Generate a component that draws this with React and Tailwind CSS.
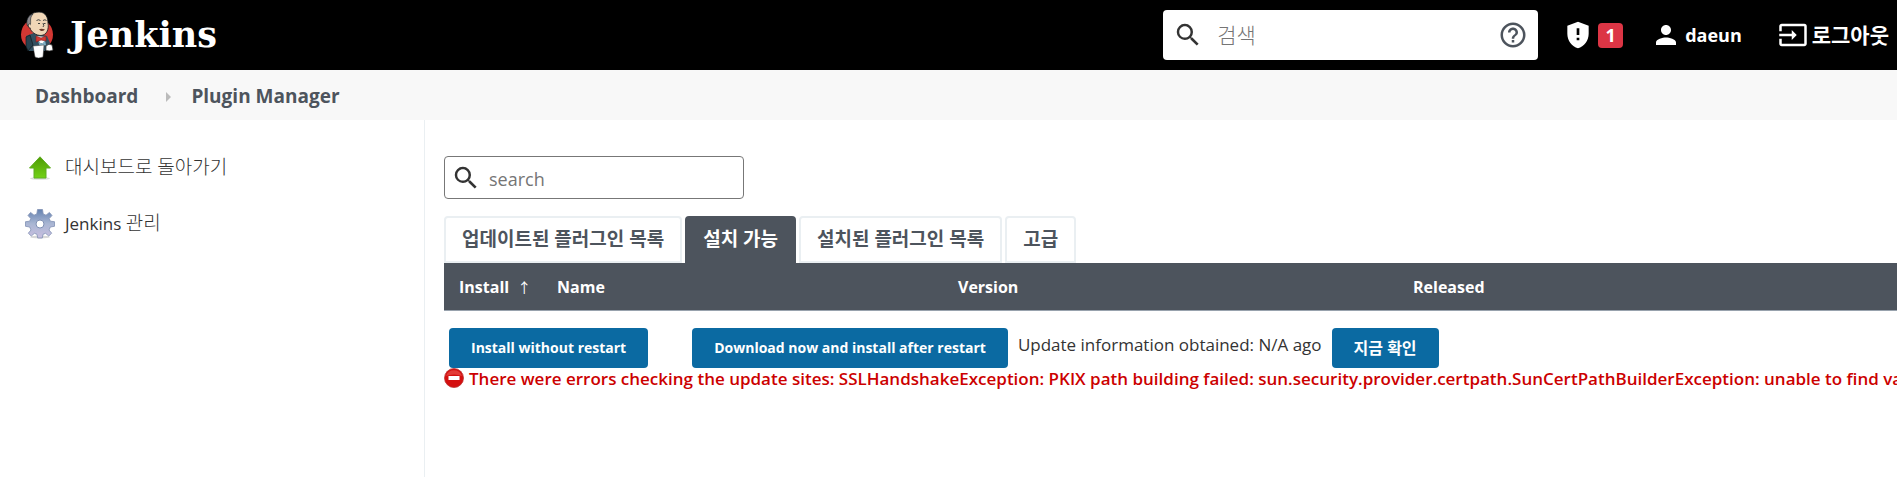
import { useState } from 'react';
import { MdSearch, MdHelpOutline, MdPerson, MdInput, MdGppMaybe } from 'react-icons/md';

const tabs = ['업데이트된 플러그인 목록', '설치 가능', '설치된 플러그인 목록', '고급'];

function JenkinsLogo() {
  return (
    <svg viewBox="0 0 34 48" className="h-12 w-[34px] shrink-0" aria-hidden="true">
      <circle cx="17" cy="23.500" r="16" fill="#d33833" />
      <path d="M6 25 L14 22 L27 25 L30 32 L25 40 L9 40 L6 35 Z" fill="#335061" />
      <path d="M6 26 L10 24 L13 34 L8 40 L6 35 Z" fill="#28424f" stroke="#131b20" strokeWidth=".7" />
      <path d="M16 25 L26 26 L24 33 L20 32 Z" fill="#fff" />
      <path d="M18 30 L22 33 L25 29 L26 34 L20 36 Z" fill="#81b0c4" />
      <path d="M8 11 C8 4 13 1 19 1 C26 1 28 7 28 12 C29 18 27 24 21 24.500 C16 24.500 11 21 10 17 Z" fill="#f0d6b7" stroke="#131b20" strokeWidth=".8" />
      <path d="M7.500 15 C5.500 10 8 4 13 3 C9.500 7 11 9 10.500 13 L9 16 Z" fill="#8d8a8d" stroke="#131b20" strokeWidth=".6" />
      <path d="M10 13 C7.500 12 8 17 10.500 17.500" fill="#f0d6b7" stroke="#131b20" strokeWidth=".7" />
      <path d="M16.500 9.500 q2 -1.500 4 0 M23 9.500 q2 -1.500 3.500 0 M18 12.500 h2 M24 12.500 h1.500 M23 12 q1.500 3 0 4" fill="none" stroke="#131b20" strokeWidth=".8" />
      <path d="M19 18.500 q2 -1.500 6 0 q-2 2 -4 1.500 Z" fill="#6d3c2c" />
      <path d="M16 25 L21 27 L26 25 L26 30 L21 29 L16 31 Z" fill="#d33833" stroke="#81201c" strokeWidth=".6" />
      <path d="M13 35 L24 34 L23 46 Q18 48 15 46 Z" fill="#fff" stroke="#333" strokeWidth=".5" />
      <path d="M26 35 q3 -3 6 -1 l1 5 q-3 1.500 -7 .5 Z" fill="#fff" stroke="#333" strokeWidth=".7" />
    </svg>
  );
}

function UpArrow() {
  return (
    <svg viewBox="0 0 24 24" className="size-6" aria-hidden="true">
      <defs>
        <linearGradient id="up" x1="0" y1="0" x2="0" y2="1">
          <stop offset="0" stopColor="#4e9a06" />
          <stop offset="1" stopColor="#73d216" />
        </linearGradient>
      </defs>
      <ellipse cx="12" cy="22.500" rx="10" ry="1.300" fill="#ddd" />
      <path d="M12 .8 L22.500 12 H18 V22 H6 V12 H1.500 Z" fill="url(#up)" stroke="#5fae22" strokeWidth="1" strokeLinejoin="round" />
    </svg>
  );
}

function Gear() {
  return (
    <svg viewBox="-15 -15 30 30" className="size-[30px]" aria-hidden="true">
      <defs>
        <linearGradient id="gear" x1="0" y1="0" x2="0" y2="1">
          <stop offset="0" stopColor="#6482b0" />
          <stop offset=".5" stopColor="#a9b6d3" />
          <stop offset="1" stopColor="#c9bfe0" />
        </linearGradient>
      </defs>
      <ellipse cx="0" cy="13" rx="10" ry="1.500" fill="#d8d8d8" />
      <path
        d="M-2.500 -14.500 H2.500 L3.200 -10 L6 -8.800 L9.400 -11.600 L12 -8.500 L9.200 -5.500 L10.300 -2.800 L14.500 -2.300 V2.300 L10.300 3 L9 6 L11.700 9.200 L8.700 12 L5.600 9.300 L3 10.300 L2.300 14 H-2.300 L-3 10.300 L-5.600 9.300 L-8.700 12 L-11.700 9.200 L-9 6 L-10.300 3 L-14.500 2.300 V-2.300 L-10.300 -2.800 L-9.200 -5.500 L-12 -8.500 L-9.400 -11.600 L-6 -8.800 L-3.200 -10 Z"
        fill="url(#gear)"
        stroke="#8090b4"
        strokeWidth=".8"
        strokeLinejoin="round"
      />
      <circle r="4" fill="#fff" stroke="#8090b4" strokeWidth="1" />
    </svg>
  );
}

function ErrorIcon() {
  return (
    <svg viewBox="0 0 20 20" className="size-5 shrink-0" aria-hidden="true">
      <circle cx="10" cy="10" r="9.500" fill="#d40f0f" stroke="#b33" strokeWidth=".8" />
      <path d="M2 8 A8.500 8.500 0 0 1 18 8 Q10 5 2 8" fill="#e23a36" />
      <rect x="4.500" y="8" width="11" height="4" fill="#fff" />
    </svg>
  );
}

function Button({ children }) {
  return (
    <button type="button" className="h-10 rounded bg-[#0b6aa2] px-[22px] pt-px text-sm font-bold text-white">
      {children}
    </button>
  );
}

export default function App() {
  const [activeTab, setActiveTab] = useState(1);
  const [search, setSearch] = useState('');
  const [filter, setFilter] = useState('');

  return (
    <div className="flex min-h-screen flex-col overflow-hidden bg-white font-['Open_Sans','Noto_Sans_CJK_KR',sans-serif] text-lg text-[#333]">
      <header className="flex h-[70px] items-center justify-between bg-black pr-2 pl-5 font-bold text-white">
        <a href="#" className="flex items-center gap-4">
          <JenkinsLogo />
          <span className="font-['DejaVu_Serif',serif] text-[35px] leading-10">Jenkins</span>
        </a>
        <div className="flex items-center">
          <label className="mr-6 flex h-[50px] w-[375px] items-center rounded bg-white px-[10px] text-[#4d545d]">
            <MdSearch className="size-[30px] shrink-0 text-[#333]" />
            <input
              type="text"
              aria-label="검색"
              placeholder="검색"
              value={search}
              onChange={(e) => setSearch(e.target.value)}
              className="ml-[14px] min-w-0 flex-1 text-[21px] font-light placeholder:text-[#757575]"
            />
            <MdHelpOutline className="size-[30px] shrink-0" />
          </label>
          <a href="#" className="mr-7 flex items-center gap-1">
            <MdGppMaybe className="size-8" />
            <span className="flex h-[25px] w-[25px] items-center justify-center rounded bg-[#dc3545]">1</span>
          </a>
          <a href="#" className="mr-9 flex items-center gap-1">
            <MdPerson className="size-[30px]" />
            daeun
          </a>
          <a href="#" className="flex items-center gap-1">
            <MdInput className="size-[30px]" />
            <span className="text-[21px]">로그아웃</span>
          </a>
        </div>
      </header>

      <nav className="flex h-[50px] items-center bg-[#f8f8f8] px-[35px] pt-[3px] text-[19px] font-bold text-[#4d545d]">
        <a href="#">Dashboard</a>
        <svg viewBox="0 0 5 10" className="mr-5 ml-7 h-[10px] w-[5px]" aria-hidden="true">
          <path d="M0 0 L5 5 L0 10 Z" fill="#bbb" />
        </svg>
        <a href="#">Plugin Manager</a>
      </nav>

      <div className="flex flex-1">
        <aside className="w-[425px] shrink-0 border-r border-[#eaeff2] px-[25px] pt-5">
          <a href="#" className="flex h-14 items-center gap-[10px] text-[19px] font-light">
            <span className="flex w-[30px] justify-center">
              <UpArrow />
            </span>
            대시보드로 돌아가기
          </a>
          <a href="#" className="flex h-14 items-center gap-[10px]">
            <Gear />
            <span className="text-[17px] font-medium">
              Jenkins <span className="text-[19px] font-light">관리</span>
            </span>
          </a>
        </aside>

        <main className="min-w-0 flex-1 pt-9 pl-[19px]">
          <label className="flex h-[43px] w-[300px] items-center rounded border border-[#777] px-[6px]">
            <MdSearch className="size-[30px] shrink-0" />
            <input
              type="text"
              aria-label="search"
              placeholder="search"
              value={filter}
              onChange={(e) => setFilter(e.target.value)}
              className="ml-2 min-w-0 flex-1 pt-[2px] placeholder:text-[#757575]"
            />
          </label>

          <div className="mt-[17px] flex gap-[3px]">
            {tabs.map((tab, i) => (
              <button
                key={tab}
                type="button"
                onClick={() => setActiveTab(i)}
                className={
                  i === activeTab
                    ? 'h-[47px] rounded-t border-2 border-[#4d545d] bg-[#4d545d] px-4 text-[19px] font-bold text-white'
                    : 'h-[47px] rounded-t border-2 border-[#eaeff2] bg-white px-4 text-[19px] font-bold text-[#4d545d]'
                }
              >
                {tab}
              </button>
            ))}
          </div>

          <table className="w-full table-fixed border-b border-[#98a2ad] bg-[#4d545d] text-left text-base text-white">
            <colgroup>
              <col className="w-[98px]" />
              <col className="w-[401px]" />
              <col className="w-[455px]" />
              <col />
            </colgroup>
            <thead>
              <tr className="h-[47px]">
                <th className="pt-[2px] pl-[15px] whitespace-nowrap">
                  Install <span className="ml-1 text-sm font-normal">↑</span>
                </th>
                <th className="pt-[2px] pl-[15px]">Name</th>
                <th className="pt-[2px] pl-[15px]">Version</th>
                <th className="pt-[2px] pl-[15px]">Released</th>
              </tr>
            </thead>
          </table>

          <div className="flex items-center pt-[17px] pl-[5px] whitespace-nowrap">
            <Button>Install without restart</Button>
            <span className="w-11" />
            <Button>Download now and install after restart</Button>
            <span className="px-[10px] pb-1 text-[17px]">Update information obtained: N/A ago</span>
            <Button>
              <span className="text-base leading-5">지금 확인</span>
            </Button>
          </div>
          <div className="flex h-5 items-center gap-[5px] text-[17px] font-semibold whitespace-nowrap text-[#c00]">
            <ErrorIcon />
            <span className="pt-[3px]">
              There were errors checking the update sites: SSLHandshakeException: PKIX path building failed:
              sun.security.provider.certpath.SunCertPathBuilderException: unable to find valid certification path to
              requested target
            </span>
          </div>
        </main>
      </div>
    </div>
  );
}
